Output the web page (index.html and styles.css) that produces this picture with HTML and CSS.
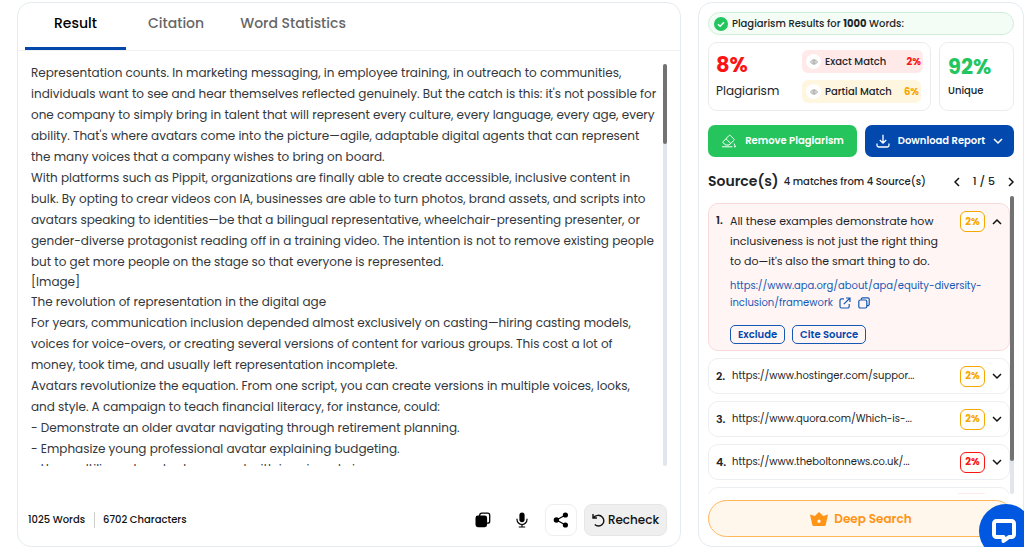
FILE: index.html
```html
<!DOCTYPE html>
<html lang="en">
<head>
    <meta charset="UTF-8">
    <meta name="viewport" content="width=device-width, initial-scale=1.0">
    <title>Plagiarism Checker - Result</title>
    <link rel="stylesheet" href="styles.css">
</head>
<body>
    <main class="app">
        <section class="panel result">
            <nav class="tabs">
                <button class="tab active">Result</button>
                <button class="tab">Citation</button>
                <button class="tab">Word Statistics</button>
            </nav>

            <div class="document">
                <div class="document-text">
                    <p>Representation counts. In marketing messaging, in employee training, in outreach to communities,<br>
                    individuals want to see and hear themselves reflected genuinely. But the catch is this: it's not possible for<br>
                    one company to simply bring in talent that will represent every culture, every language, every age, every<br>
                    ability. That's where avatars come into the picture—agile, adaptable digital agents that can represent<br>
                    the many voices that a company wishes to bring on board.</p>
                    <p>With platforms such as Pippit, organizations are finally able to create accessible, inclusive content in<br>
                    bulk. By opting to crear videos con IA, businesses are able to turn photos, brand assets, and scripts into<br>
                    avatars speaking to identities—be that a bilingual representative, wheelchair-presenting presenter, or<br>
                    gender-diverse protagonist reading off in a training video. The intention is not to remove existing people<br>
                    but to get more people on the stage so that everyone is represented.</p>
                    <p class="single">[Image]</p>
                    <p class="single">The revolution of representation in the digital age</p>
                    <p>For years, communication inclusion depended almost exclusively on casting—hiring casting models,<br>
                    voices for voice-overs, or creating several versions of content for various groups. This cost a lot of<br>
                    money, took time, and usually left representation incomplete.</p>
                    <p>Avatars revolutionize the equation. From one script, you can create versions in multiple voices, looks,<br>
                    and style. A campaign to teach financial literacy, for instance, could:</p>
                    <p>- Demonstrate an older avatar navigating through retirement planning.</p>
                    <p>- Emphasize young professional avatar explaining budgeting.</p>
                    <p class="single">- Use multilingual avatar to connect with immigrant viewers.</p>
                </div>
                <div class="scrollbar"><div class="thumb thumb-text"></div></div>
            </div>

            <footer class="result-footer">
                <div class="counts">
                    <span>1025 Words</span>
                    <span>6702 Characters</span>
                </div>
                <div class="tools">
                    <button class="tool" aria-label="Copy">
                        <svg width="16" height="16" viewBox="0 0 16 16"><rect x="4.7" y="1.2" width="10" height="10" rx="2" fill="none" stroke="#000" stroke-width="1.3"/><rect x=".5" y="3.6" width="11.6" height="11.6" rx="2.4"/></svg>
                    </button>
                    <button class="tool" aria-label="Voice">
                        <svg width="16" height="16" viewBox="0 0 16 16"><rect x="5.4" y=".6" width="5.2" height="9.6" rx="2.6"/><path d="M3 6.8v.7a5 5 0 0 0 10 0v-.7M8 12.5V15M4.8 15h6.4" fill="none" stroke="#000" stroke-width="1.2"/></svg>
                    </button>
                    <button class="tool boxed" aria-label="Share">
                        <svg width="16" height="16" viewBox="0 0 16 16"><path d="M12.5 3 3.5 8l9 5" fill="none" stroke="#000" stroke-width="1.2"/><circle cx="12.4" cy="3" r="2.6"/><circle cx="3.4" cy="8" r="2.7"/><circle cx="12.4" cy="13" r="2.6"/></svg>
                    </button>
                    <button class="recheck">
                        <svg width="13" height="14" viewBox="0 0 13 14" fill="none" stroke="#111" stroke-width="1.4"><path d="M1 1v4h4M1.200 4.800C3.500 1.800 8 1.400 10.400 4.200a5.200 5.200 0 0 1-7.600 7.200"/></svg>
                        Recheck
                    </button>
                </div>
            </footer>
        </section>

        <aside class="panel report">
            <div class="banner">
                <svg width="14" height="14" viewBox="0 0 14 14"><circle cx="7" cy="7" r="7" fill="#22c55e"/><path d="m4 7.2 2.1 2L10 5.2" fill="none" stroke="#fff" stroke-width="1.5"/></svg>
                <span>Plagiarism Results for <b>1000</b> Words:</span>
            </div>

            <div class="stats">
                <div class="card plagiarism">
                    <div class="score">
                        <strong class="red">8%</strong>
                        <span class="score-label">Plagiarism</span>
                    </div>
                    <div class="matches">
                        <div class="match exact">
                            <span class="eye"><svg width="8" height="8" viewBox="0 0 8 8" fill="none" stroke="#888" stroke-width=".8"><path d="M.4 4Q4-.4 7.6 4 4 8.400.4 4Z"/><circle cx="4" cy="4" r="1.2"/></svg></span>
                            <span>Exact Match</span>
                            <b class="red">2%</b>
                        </div>
                        <div class="match partial">
                            <span class="eye"><svg width="8" height="8" viewBox="0 0 8 8" fill="none" stroke="#888" stroke-width=".8"><path d="M.4 4Q4-.4 7.6 4 4 8.400.4 4Z"/><circle cx="4" cy="4" r="1.2"/></svg></span>
                            <span>Partial Match</span>
                            <b class="amber">6%</b>
                        </div>
                    </div>
                </div>
                <div class="card unique">
                    <strong class="green">92%</strong>
                    <span>Unique</span>
                </div>
            </div>

            <div class="actions">
                <button class="action remove">
                    <svg width="16" height="14" viewBox="0 0 16 14" fill="none" stroke="#fff" stroke-width="1"><path d="m2 7.800 6-6.300a1 1 0 0 1 1.400 0l3.500 3.500a1 1 0 0 1 0 1.400L8 11H4.800L2 8.800a.7.7 0 0 1 0-1ZM5 4.800 9.800 9.500M1 12.800h10.500M13 9.500l1.500 3.300H13"/></svg>
                    Remove Plagiarism
                </button>
                <button class="action download">
                    <svg width="14" height="14" viewBox="0 0 14 14" fill="none" stroke="#fff" stroke-width="1.3"><path d="M7 .8v8M3.800 6 7 9.200 10.200 6M1 9.500v1.700A1.800 1.800 0 0 0 2.800 13h8.400a1.800 1.800 0 0 0 1.800-1.800V9.500"/></svg>
                    Download Report
                    <svg width="10" height="10" viewBox="0 0 10 10" fill="none" stroke="#fff" stroke-width="1.5"><path d="m1 3 4 4 4-4"/></svg>
                </button>
            </div>

            <div class="sources-head">
                <h2>Source(s)</h2>
                <span class="summary">4 matches from 4 Source(s)</span>
                <div class="pager">
                    <button aria-label="Previous page"><svg width="6" height="10" viewBox="0 0 6 10"><path d="M5 1 1 5l4 4"/></svg></button>
                    <span>1 / 5</span>
                    <button aria-label="Next page"><svg width="6" height="10" viewBox="0 0 6 10"><path d="m1 1 4 4-4 4"/></svg></button>
                </div>
            </div>

            <div class="sources">
                <ol class="source-list">
                    <li class="source open">
                        <b class="number">1.</b>
                        <div class="source-body">
                            <p class="quote">All these examples demonstrate how<br>inclusiveness is not just the right thing<br>to do—it's also the smart thing to do.</p>
                            <p class="link">
                                <a href="https://www.apa.org/about/apa/equity-diversity-inclusion/framework">https://www.apa.org/about/apa/equity-diversity-<br>inclusion/framework</a>
                                <svg width="12" height="12" viewBox="0 0 12 12"><path d="M5 1.800H2.500A1.500 1.500 0 0 0 1 3.300v6.200A1.500 1.500 0 0 0 2.500 11h6.200a1.500 1.500 0 0 0 1.500-1.500V7M7 1h4v4M11 1 4.800 7.200"/></svg>
                                <svg width="12" height="12" viewBox="0 0 12 12"><rect x=".8" y="3" width="8" height="8" rx="1.500"/><path d="M3.300 2.800V2.300A1.500 1.500 0 0 1 4.800.8h4.900a1.500 1.500 0 0 1 1.500 1.500v4.900a1.500 1.500 0 0 1-1.500 1.500H9"/></svg>
                            </p>
                            <div class="source-actions">
                                <button>Exclude</button>
                                <button>Cite Source</button>
                            </div>
                        </div>
                        <span class="badge amber">2%</span>
                        <button class="toggle" aria-label="Collapse"><svg width="10" height="10" viewBox="0 0 10 10"><path d="m1 7 4-4 4 4"/></svg></button>
                    </li>
                    <li class="source">
                        <b class="number">2.</b>
                        <span class="url">https://www.hostinger.com/suppor...</span>
                        <span class="badge amber">2%</span>
                        <button class="toggle" aria-label="Expand"><svg width="10" height="10" viewBox="0 0 10 10"><path d="m1 3 4 4 4-4"/></svg></button>
                    </li>
                    <li class="source">
                        <b class="number">3.</b>
                        <span class="url">https://www.quora.com/Which-is-...</span>
                        <span class="badge amber">2%</span>
                        <button class="toggle" aria-label="Expand"><svg width="10" height="10" viewBox="0 0 10 10"><path d="m1 3 4 4 4-4"/></svg></button>
                    </li>
                    <li class="source">
                        <b class="number">4.</b>
                        <span class="url">https://www.theboltonnews.co.uk/...</span>
                        <span class="badge red">2%</span>
                        <button class="toggle" aria-label="Expand"><svg width="10" height="10" viewBox="0 0 10 10"><path d="m1 3 4 4 4-4"/></svg></button>
                    </li>
                    <li class="source next"></li>
                </ol>
                <div class="scrollbar"><div class="thumb thumb-sources"></div></div>
            </div>

            <button class="deep-search">
                <svg width="18" height="14" viewBox="0 0 18 14"><path fill="#ff9416" fill-rule="evenodd" d="M0 2.500 4.800 4 9 0l4.200 4L18 2.500 15.800 12.500Q15.500 14 14 14H4Q2.500 14 2.200 12.500ZM9 7.500a1.700 1.700 0 1 0 0 3.400 1.700 1.700 0 0 0 0-3.400Z"/></svg>
                Deep Search
            </button>
        </aside>
    </main>

    <button class="chat" aria-label="Open chat">
        <svg width="26" height="26" viewBox="0 0 26 26" fill="none" stroke="#fff" stroke-width="4" stroke-linejoin="round"><path d="M5.500 3h15a2.500 2.500 0 0 1 2.500 2.500v11a2.500 2.500 0 0 1-2.500 2.500H18l-5.500 4V19h-7A2.500 2.500 0 0 1 3 16.500v-11A2.500 2.500 0 0 1 5.500 3Z"/></svg>
    </button>
</body>
</html>
```

FILE: styles.css
```css
* {
    box-sizing: border-box;
}

body {
    margin: 0;
    overflow: hidden;
    background: #fff;
    color: #212529;
    font-family: Poppins, Inter, "Open Sans", sans-serif;
    font-size: 12px;
}

button {
    padding: 0;
    border: none;
    background: none;
    color: inherit;
    font: inherit;
    cursor: pointer;
}

p,
h2,
ol {
    margin: 0;
    padding: 0;
}

svg {
    display: block;
    flex: none;
}

.red {
    color: #fa1414;
}

.amber {
    color: #f5a800;
}

.green {
    color: #22c55e;
}

.app {
    display: grid;
    grid-template-columns: 664fr 326fr;
    gap: 17px;
    height: 100vh;
    padding: 2px 0 0 17px;
}

.panel {
    display: flex;
    flex-direction: column;
    min-width: 0;
    min-height: 0;
    border: 1px solid #e4ecef;
    border-radius: 14px;
}

/* Result panel */
.tabs {
    display: flex;
    padding: 0 7px;
    height: 48px;
    border-bottom: 1px solid #f0f2f4;
}

.tab {
    height: 47px;
    padding: 0 18px 4px;
    border-bottom: 3px solid transparent;
    color: #666;
    font-size: 14px;
    font-weight: 500;
}

.tab.active {
    width: 101px;
    margin-right: 4px;
    border-bottom-color: #0447ab;
    color: #000;
}

.document {
    display: flex;
    flex: 1;
    min-height: 0;
    margin: 11px 13px 0 13px;
}

.document-text {
    flex: 1;
    min-width: 0;
    overflow: hidden;
    color: #33373b;
    line-height: 21px;
    white-space: nowrap;
}

.document-text .single {
    line-height: 20px;
}

.scrollbar {
    flex: none;
    width: 4px;
    border-radius: 2px;
    background: #e1e6ec;
}

.document .scrollbar {
    margin-top: 2px;
}

.thumb {
    border-radius: 2px;
    background: #727272;
}

.thumb-text {
    height: 20%;
}

.result-footer {
    display: flex;
    flex: none;
    justify-content: space-between;
    align-items: center;
    height: 80px;
    padding: 28px 13px 0 10px;
}

.counts {
    display: flex;
    color: #111;
    font-size: 10px;
    font-weight: 500;
}

.counts span + span {
    margin-left: 9px;
    padding-left: 8px;
    border-left: 1px solid #ccc;
}

.tools {
    display: flex;
    gap: 7px;
}

.tool,
.recheck {
    display: flex;
    justify-content: center;
    align-items: center;
    width: 32px;
    height: 32px;
    border-radius: 8px;
}

.boxed {
    border: 1px solid #eee;
}

.recheck {
    gap: 3px;
    width: 83px;
    border: 1px solid #e6e6e6;
    background: #efefef;
    color: #111;
    font-size: 12px;
    font-weight: 500;
}

/* Report panel */
.report {
    padding: 9px;
}

.banner {
    display: flex;
    flex: none;
    align-items: center;
    gap: 4px;
    height: 23px;
    padding-left: 5px;
    border: 1px solid #cfeeda;
    border-radius: 12px;
    background: #f3fdf6;
    font-size: 10px;
    font-weight: 500;
}

.stats {
    display: flex;
    flex: none;
    gap: 8px;
    height: 69px;
    margin-top: 7px;
}

.card {
    display: flex;
    border: 1px solid #e9ecef;
    border-radius: 9px;
}

.plagiarism {
    flex: 1;
    align-items: center;
    justify-content: space-between;
    padding: 0 7px;
}

.score,
.unique {
    display: flex;
    flex-direction: column;
    justify-content: center;
}

.card strong {
    font-size: 21px;
    line-height: 28px;
}

.score-label {
    font-size: 12px;
    line-height: 24px;
}

.unique {
    width: 75px;
    padding-left: 8px;
    font-size: 10px;
    font-weight: 500;
    line-height: 20px;
}

.matches {
    display: flex;
    flex-direction: column;
    gap: 7px;
    width: 121px;
}

.match {
    display: flex;
    align-items: center;
    gap: 4px;
    height: 23px;
    padding: 0 2px 0 4px;
    border-radius: 6px;
    font-size: 10px;
    font-weight: 500;
}

.match b {
    margin-left: auto;
    font-size: 10px;
}

.exact {
    background: #ffe9e9;
}

.partial {
    margin-right: 2px;
    background: #fff6df;
}

.eye {
    display: flex;
    justify-content: center;
    align-items: center;
    width: 15px;
    height: 15px;
    border-radius: 50%;
    background: #fff;
}

.actions {
    display: grid;
    grid-template-columns: 1fr 1fr;
    flex: none;
    gap: 8px;
    margin-top: 14px;
}

.action {
    display: flex;
    justify-content: center;
    align-items: center;
    gap: 8px;
    height: 32px;
    border-radius: 7px;
    color: #fff;
    font-size: 10px;
    font-weight: 600;
    white-space: nowrap;
}

.remove {
    background: #25c45c;
}

.download {
    background: #0349ad;
}

.sources-head {
    display: flex;
    flex: none;
    align-items: center;
    height: 39px;
    padding-top: 10px;
    white-space: nowrap;
}

.sources-head h2 {
    font-size: 14px;
    font-weight: 600;
}

.summary {
    margin-left: 5px;
    font-size: 10px;
    font-weight: 500;
}

.pager {
    display: flex;
    align-items: center;
    gap: 13px;
    margin-left: auto;
    font-size: 11px;
    font-weight: 500;
}

.pager svg,
.toggle svg {
    fill: none;
    stroke: #111;
    stroke-width: 1.5;
}

.sources {
    display: flex;
    flex: 1;
    min-height: 0;
}

.source-list {
    flex: 1;
    min-width: 0;
    padding-top: 7px;
    overflow: hidden;
    list-style: none;
}

.thumb-sources {
    height: 89%;
}

.source {
    display: flex;
    align-items: center;
    height: 36px;
    margin-bottom: 7px;
    padding: 0 7px;
    border: 1px solid #eceff1;
    border-radius: 10px;
}

.source.open {
    align-items: flex-start;
    height: 148px;
    padding-top: 7px;
    border-color: #f9dada;
    background: #fff5f5;
}

.source.next {
    align-items: flex-start;
    justify-content: flex-end;
    padding: 5px 24px;
}

.next::after {
    width: 27px;
    height: 2px;
    background: #ffe9e9;
    content: "";
}

.number {
    width: 16px;
    font-size: 11px;
    font-weight: 600;
}

.open .number {
    width: 14px;
    line-height: 18px;
}

.source-body {
    flex: 1;
    min-width: 0;
    white-space: nowrap;
}

.quote {
    font-size: 11px;
    line-height: 20px;
}

.link {
    margin-top: 6px;
    color: #1559b4;
    font-size: 10px;
    line-height: 17px;
}

.link a {
    color: inherit;
    text-decoration: none;
}

.link svg {
    display: inline-block;
    margin-left: 4px;
    fill: none;
    stroke: #1559b4;
    stroke-width: 1.2;
    vertical-align: -3px;
}

.source-actions {
    display: flex;
    gap: 7px;
    margin-top: 14px;
}

.source-actions button {
    height: 19px;
    padding: 0 7px;
    border: 1px solid #1559b4;
    border-radius: 5px;
    color: #0349ad;
    font-size: 10px;
    font-weight: 600;
}

.url {
    flex: 1;
    min-width: 0;
    overflow: hidden;
    font-size: 10px;
    white-space: nowrap;
}

.badge {
    display: flex;
    flex: none;
    justify-content: center;
    align-items: center;
    width: 25px;
    height: 21px;
    border: 1px solid currentColor;
    border-radius: 6px;
    background: #fffdf8;
    font-size: 10px;
    font-weight: 700;
}

.toggle {
    margin-left: 7px;
}

.open .toggle {
    height: 21px;
}

.deep-search {
    display: flex;
    flex: none;
    justify-content: center;
    align-items: center;
    gap: 6px;
    height: 37px;
    margin-top: 6px;
    border: 1px solid #ffb75c;
    border-radius: 19px;
    background: #fff6ec;
    color: #ff9416;
    font-size: 12px;
    font-weight: 600;
}

/* Chat launcher */
.chat {
    position: fixed;
    right: -9px;
    bottom: -11px;
    display: flex;
    justify-content: center;
    align-items: center;
    width: 54px;
    height: 54px;
    padding-right: 4px;
    border-radius: 50%;
    background: #0057e0;
}
```
